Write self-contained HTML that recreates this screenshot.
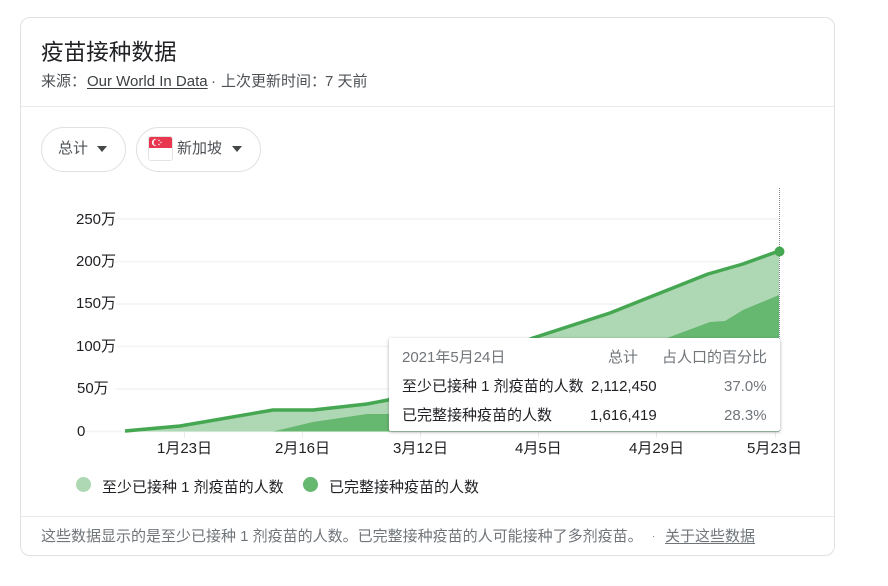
<!DOCTYPE html>
<html lang="zh">
<head>
<meta charset="utf-8">
<title>疫苗接种数据</title>
<style>
html,body{margin:0;padding:0;background:#fff}
body{width:888px;height:586px;position:relative;overflow:hidden;font-family:"Liberation Sans","Noto Sans CJK SC",sans-serif;color:#202124;font-size:15px}
.a{position:absolute;white-space:pre;line-height:20px}
.card{position:absolute;left:20px;top:17px;width:813px;height:537px;border:1px solid #dfe1e5;border-radius:10px}
.hr{position:absolute;left:21px;width:813px;height:1px;background:#e8eaed}
.pill{position:absolute;top:127px;height:43px;border:1px solid #dfe1e5;border-radius:23px;background:#fff}
.tri{position:absolute;width:0;height:0;border-left:5.500px solid transparent;border-right:5.500px solid transparent;border-top:6px solid #444746}
.tip{position:absolute;left:389px;top:338px;width:391px;height:93px;background:#fff;border-radius:2px;box-shadow:0 1px 3px rgba(60,64,67,.45)}
.dot{position:absolute;width:15px;height:15px;border-radius:50%}
u{text-underline-offset:2px}
</style>
</head>
<body>
<div class="card"></div>
<div class="a" style="left:41px;top:38px;font-size:22.6px;line-height:30px">疫苗接种数据</div>
<div class="a" style="left:41px;top:72px;color:#4d5156">来源：</div>
<div class="a" style="left:87px;top:72px;color:#3c4043"><u>Our World In Data</u></div>
<div class="a" style="left:211px;top:72px;color:#4d5156">·</div>
<div class="a" style="left:221px;top:72px;color:#4d5156">上次更新时间：</div>
<div class="a" style="left:325px;top:72px;color:#4d5156">7 天前</div>
<div class="hr" style="top:106px"></div>

<div class="pill" style="left:41px;width:83px"></div>
<div class="a" style="left:58px;top:139px;color:#4d5156">总计</div>
<div class="tri" style="left:97px;top:146px"></div>
<div class="pill" style="left:136px;width:123px"></div>
<svg style="position:absolute;left:148px;top:136px" width="25" height="25" viewBox="0 0 25 25">
<rect x=".5" y=".5" width="24" height="24" rx="2.500" fill="#fff" stroke="#e3e3e3"/>
<path d="M1 3a2 2 0 0 1 2-2h19a2 2 0 0 1 2 2v9H1z" fill="#e8384f"/>
<circle cx="7.500" cy="6.500" r="3.600" fill="#fff"/><circle cx="9" cy="6.500" r="3.400" fill="#e8384f"/>
<circle cx="11" cy="4.500" r=".7" fill="#fff"/><circle cx="13" cy="6.500" r=".7" fill="#fff"/><circle cx="11" cy="8.500" r=".7" fill="#fff"/>
</svg>
<div class="a" style="left:177px;top:139px;color:#4d5156;font-size:15px">新加坡</div>
<div class="tri" style="left:232px;top:146px"></div>

<svg style="position:absolute;left:0;top:0" width="888" height="586">
<g stroke="#f1f3f4" stroke-width="1.500">
<path d="M116 219H779M116 261.500H779M116 304H779M116 346.500H779M116 389H779M85 431.500H779"/>
</g>
<g stroke="#e8eaed" stroke-width="1">
<path d="M184.500 432V438M302.500 432V438M420.500 432V438M538.500 432V438M656.500 432V438M775.500 432V438"/>
</g>
<path d="M125 431L180 426L273 410L313 410L367 404L388 400L533 338L610 313L708 274L743 264L779 251V431.500H125Z" fill="#aed8b3"/>
<path d="M273 431.500L313 422L367 414L388 414L500 400L667 338L710 322L725 321L743 310L779 295V431.500Z" fill="#66b770"/>
<path d="M125 431L180 426L273 410L313 410L367 404L388 400L533 338L610 313L708 274L743 264L779 251" fill="none" stroke="#46a752" stroke-width="3.500" stroke-linejoin="round"/>
<path d="M779.500 188V431" stroke="#80868b" stroke-width="1" stroke-dasharray="1 1"/>
<circle cx="779.500" cy="251.500" r="5" fill="#46a752"/>
</svg>

<div class="a" style="left:76px;top:210px">250万</div>
<div class="a" style="left:76px;top:252px">200万</div>
<div class="a" style="left:76px;top:294px">150万</div>
<div class="a" style="left:76px;top:337px">100万</div>
<div class="a" style="left:77px;top:379px">50万</div>
<div class="a" style="left:77px;top:422px">0</div>

<div class="a" style="left:157px;top:439px">1月23日</div>
<div class="a" style="left:275px;top:439px">2月16日</div>
<div class="a" style="left:393px;top:439px">3月12日</div>
<div class="a" style="left:515px;top:439px">4月5日</div>
<div class="a" style="left:629px;top:439px">4月29日</div>
<div class="a" style="left:747px;top:439px">5月23日</div>

<div class="tip"></div>
<div class="a" style="left:402px;top:348px;color:#70757a">2021年5月24日</div>
<div class="a" style="left:608px;top:348px;color:#70757a">总计</div>
<div class="a" style="left:662px;top:348px;color:#70757a">占人口的百分比</div>
<div class="a" style="left:402px;top:377px">至少已接种 1 剂疫苗的人数</div>
<div class="a" style="left:591px;top:377px">2,112,450</div>
<div class="a" style="left:724px;top:377px;color:#70757a">37.0%</div>
<div class="a" style="left:402px;top:406px">已完整接种疫苗的人数</div>
<div class="a" style="left:590px;top:406px">1,616,419</div>
<div class="a" style="left:724px;top:406px;color:#70757a">28.3%</div>

<div class="dot" style="left:76px;top:477px;background:#aed8b3"></div>
<div class="a" style="left:102px;top:478px">至少已接种 1 剂疫苗的人数</div>
<div class="dot" style="left:303px;top:477px;background:#66b770"></div>
<div class="a" style="left:329px;top:478px">已完整接种疫苗的人数</div>

<div class="hr" style="top:516px"></div>
<div class="a" style="left:41px;top:527px;color:#70757a">这些数据显示的是至少已接种 1 剂疫苗的人数。已完整接种疫苗的人可能接种了多剂疫苗。</div>
<div class="a" style="left:652px;top:527px;color:#70757a;font-size:10px">·</div>
<div class="a" style="left:665px;top:527px;color:#70757a"><u>关于这些数据</u></div>
</body>
</html>
